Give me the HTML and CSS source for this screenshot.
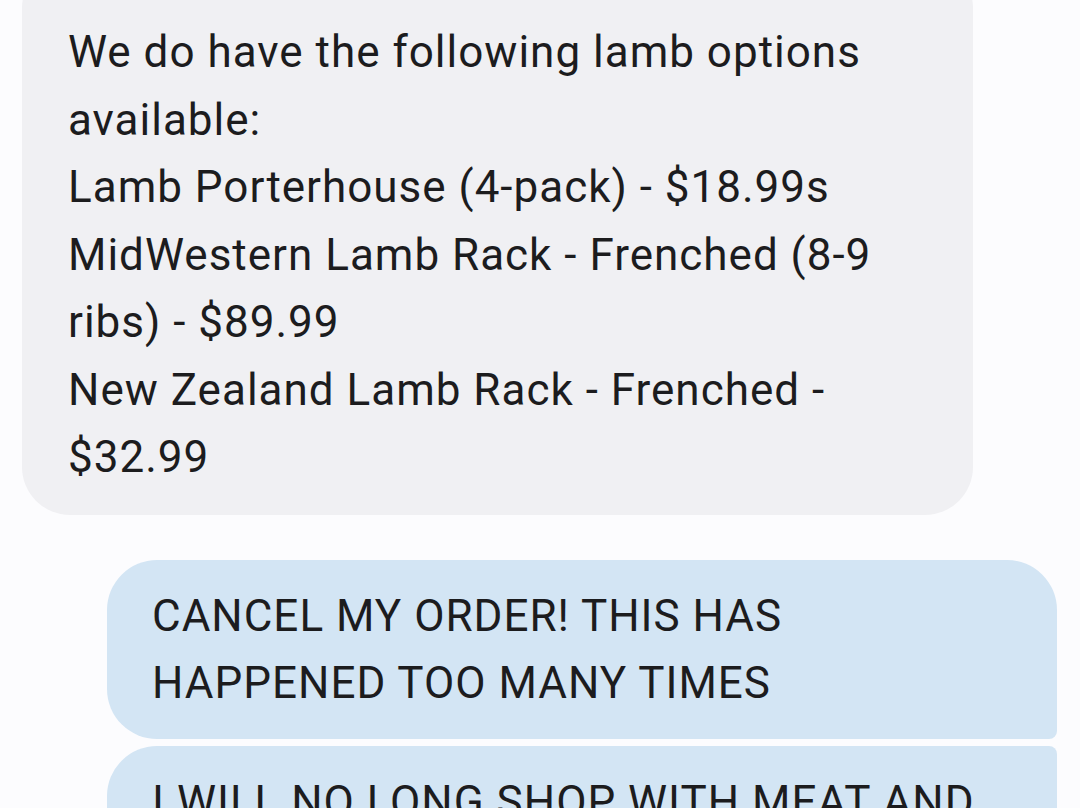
FILE: index.html
```html
<!DOCTYPE html>
<html lang="en">
    <head>
        <meta charset="UTF-8" />
        <meta name="viewport" content="width=device-width, initial-scale=1.0" />
        <title>Messages</title>
        <link rel="stylesheet" href="styles.css">
    </head>

    <body>
        <main class="thread">
            <div class="msg msg-in">
                <p class="bubble bubble-in">
                    We do have the following lamb options<br>
                    available:<br>
                    Lamb Porterhouse (4-pack) - $18.99s<br>
                    MidWestern Lamb Rack - Frenched (8-9<br>
                    ribs) - $89.99<br>
                    New Zealand Lamb Rack - Frenched -<br>
                    $32.99
                </p>
            </div>

            <div class="group-out">
                <p class="bubble bubble-out first">
                    CANCEL MY ORDER! THIS HAS<br>
                    HAPPENED TOO MANY TIMES
                </p>
                <p class="bubble bubble-out next">
                    I WILL NO LONG SHOP WITH MEAT AND<br>
                    SEAFOOD
                </p>
            </div>
        </main>
    </body>
</html>
```

FILE: styles.css
```css
* {
    margin: 0;
    padding: 0;
    box-sizing: border-box;
}

html {
    font-family: Roboto, "Noto Sans", sans-serif;
}

body {
    background: #fcfcfe;
    color: #1c1c1e;
    width: 1080px;
    height: 808px;
    overflow: hidden;
}

.thread {
    display: flex;
    flex-direction: column;
    padding: 0 23px 0 22px;
    margin-top: -40px;
}

.msg-in {
    display: flex;
}

.bubble {
    font-size: 44px;
    line-height: 67.5px;
    letter-spacing: 1px;
    white-space: nowrap;
}

.bubble-in {
    width: 951px;
    background: #f0f0f3;
    padding: 59px 46px 23px 46px;
    border-radius: 48px;
}

.group-out {
    display: flex;
    flex-direction: column;
    align-items: flex-end;
    gap: 7px;
    margin-top: 45px;
}

.bubble-out {
    width: 950px;
    background: #d3e5f4;
    padding: 23px 45px 21px 45px;
}

.first {
    border-radius: 50px 50px 8px 50px;
}

.next {
    border-radius: 50px 8px 50px 50px;
}
```
